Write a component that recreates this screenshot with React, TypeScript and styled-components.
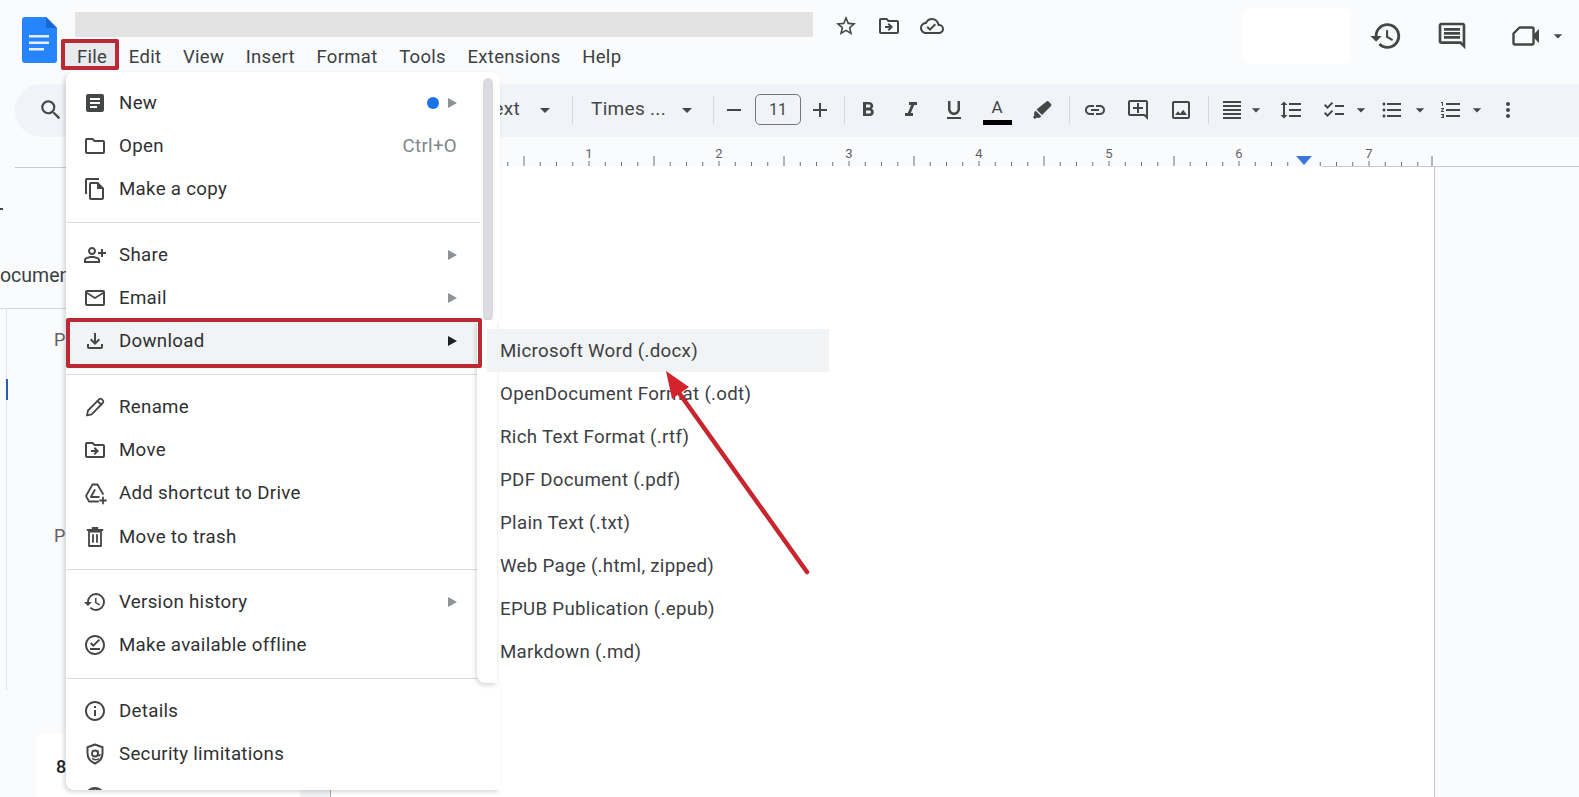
import React from "react";
import styled, { createGlobalStyle } from "styled-components";
import {
  MdArticle, MdOutlineFolder, MdOutlineFileCopy, MdOutlinePersonAddAlt, MdOutlineEmail, MdOutlineFileDownload,
  MdOutlineDriveFileMove, MdHistory, MdOutlineOfflinePin,
  MdInfoOutline, MdLanguage, MdSearch, MdStarBorder, MdOutlineCloudDone, MdOutlineComment,
  MdFormatBold, MdFormatItalic, MdFormatUnderlined, MdLink, MdOutlineAddComment, MdOutlineImage,
  MdFormatAlignJustify, MdFormatLineSpacing, MdChecklist, MdFormatListBulleted, MdFormatListNumbered, MdMoreVert,
  MdArrowDropDown, MdRemove, MdAdd,
} from "react-icons/md";

const FONT = `Roboto, "Liberation Sans", sans-serif`;
const RED = "#b92a35";

const Global = createGlobalStyle`
  html, body { margin: 0; padding: 0; background: #f9fbfd; }
  body { font-family: ${FONT}; overflow: hidden; }
  * { box-sizing: border-box; }
`;

const Page = styled.div`
  position: relative; width: 1579px; height: 797px; overflow: hidden; background: #f9fbfd;
  display: flex; flex-direction: column; color: #2f3133;
`;

/* ---------- header ---------- */
const Header = styled.header`display: flex; height: 84px; flex: none;`;
const LogoSlot = styled.div`width: 75px; flex: none; padding: 17px 0 0 22px;`;
const TitleColumn = styled.div`display: flex; flex-direction: column;`;
const TitleRow = styled.div`display: flex; align-items: center; height: 25px; margin-top: 12px;`;
const TitleBar = styled.div`width: 738px; height: 25px; background: #e3e3e3;`;
const TitleIcons = styled.div`display: flex; gap: 19px; margin: 3px 0 0 21px; color: #444746; font-size: 24px; line-height: 0;`;
const MenuBar = styled.nav`display: flex; gap: 21.6px; margin: 7px 0 0 2px; font-size: 18.5px; letter-spacing: .3px; color: #3c4043;`;
const MenuLabel = styled.span<{ $boxed?: boolean }>`
  position: relative; line-height: 26px;
  ${(p) => p.$boxed && `
    &::before { content: ""; position: absolute; z-index: 0; left: -16px; right: -12px; top: -5px; bottom: 0;
      background: #e8eaed; border: 4px solid ${RED}; border-radius: 2px; }
    & > span { position: relative; z-index: 1; }
  `}
`;
const HeaderRight = styled.div`display: flex; align-items: center; margin-left: auto; padding: 8px 11px 20px 0; color: #444746; line-height: 0;`;
const ShareSlot = styled.div`width: 109px; height: 56px; background: #fff; border-radius: 8px; margin-right: 11px;`;
const HeaderAction = styled.span<{ $w: number; $size: number; $ml?: number }>`
  width: ${(p) => p.$w}px; margin-left: ${(p) => p.$ml ?? 0}px; display: flex; justify-content: center; font-size: ${(p) => p.$size}px;
`;

/* ---------- toolbar ---------- */
const Toolbar = styled.div`
  display: flex; align-items: center; height: 53px; flex: none; margin-left: 15px; padding-bottom: 2px;
  background: #f0f3f8; border-radius: 27px 0 0 27px; color: #444746;
`;
const ToolLead = styled.div`
  width: 518px; flex: none; display: flex; justify-content: space-between; align-items: center;
  padding: 0 13px 0 23px; font-size: 26px; line-height: 0;
`;
const ToolText = styled.span<{ $ml?: number; $w?: number }>`
  margin: 0 0 2px ${(p) => p.$ml ?? 0}px; ${(p) => p.$w && `width: ${p.$w}px;`} flex: none;
  font-size: 19px; line-height: 24px; letter-spacing: .3px; white-space: nowrap;
`;
const Tool = styled.span<{ $ml: number; $w?: number }>`
  margin-left: ${(p) => p.$ml}px; width: ${(p) => p.$w ?? 24}px; height: 24px; flex: none;
  display: flex; align-items: center; justify-content: center; font-size: 24px; line-height: 0;
`;
const Caret = styled(Tool)`font-size: 26px; width: ${(p) => p.$w ?? 20}px;`;
const ToolSep = styled.span<{ $ml: number }>`margin-left: ${(p) => p.$ml}px; width: 1px; height: 28px; background: #d5d8dc; flex: none;`;
const FontSize = styled.span`
  margin-left: 9px; width: 46px; height: 31px; flex: none; border: 1px solid #747775; border-radius: 5px;
  display: flex; align-items: center; justify-content: center; font-size: 16px;
`;
const ColorTool = styled.span`
  margin: 0 0 3px 16px; width: 30px; height: 34px; flex: none; display: flex; flex-direction: column; align-items: center;
  justify-content: flex-end; font-size: 17px; line-height: 20px;
  &::after { content: ""; width: 29px; height: 5px; background: #000; margin-top: 3px; }
`;

/* ---------- ruler ---------- */
const RulerRow = styled.div`height: 30px; flex: none; line-height: 0;`;

/* ---------- workspace ---------- */
const Workspace = styled.div`flex: 1; display: flex; min-height: 0;`;
const Sidebar = styled.aside`width: 300px; flex: none; display: flex; flex-direction: column;`;
const SideRule = styled.div`height: 1px; background: #c9cdd2; margin-left: 15px;`;
const SideDash = styled.div`width: 3px; height: 2px; background: #444; margin-top: 40px;`;
const SideTitle = styled.div`margin-top: 54px; font-size: 19.5px; line-height: 24px; color: #3c4043; white-space: nowrap;`;
const SideDivider = styled.div`height: 1px; background: #d5d8dc; margin-top: 20px;`;
const Outline = styled.div`
  position: relative; height: 381px; margin-left: 6px; border-left: 1.5px solid #dfe1e5; padding: 18px 0 0 47px;
  &::before { content: ""; position: absolute; left: -1.5px; top: 70px; width: 2px; height: 21px; background: #2a5db0; }
`;
const OutlineItem = styled.div<{ $mt?: number }>`margin-top: ${(p) => p.$mt ?? 0}px; font-size: 18px; line-height: 26px; color: #5f6368;`;
const PageCard = styled.div`
  margin: 43px 0 0 36px; flex: 1; background: #fff; border-radius: 6px 0 0 0; padding: 22px 0 0 20px;
  font-size: 18px; font-weight: 500; line-height: 24px; color: #202124;
`;
const DocPage = styled.main`flex: none; width: 1135px; background: #fff; border-right: 1px solid #c7c9cc; display: flex; align-items: flex-end;`;
const DocFooter = styled.div`width: 31px; height: 7px; background: #f1f2f3; border-right: 1px solid #aaa;`;

/* ---------- file menu ---------- */
const FileMenu = styled.div`
  position: absolute; z-index: 5; left: 66px; top: 72px; width: 434px; height: 718px; overflow: hidden;
  background: #fff; border-radius: 8px 8px 0 8px; padding-top: 9px; box-shadow: -2px 2px 4px rgba(60,64,67,.2);
`;
const Scrollbar = styled.div`position: absolute; left: 417px; top: 6px; width: 10px; height: 243px; border-radius: 5px; background: #dadce0;`;
const MenuRow = styled.div<{ $active?: boolean }>`
  position: relative; display: flex; align-items: center; width: 413px; height: 43.35px; padding: 0 22px 0 17px;
  font-size: 18.7px; letter-spacing: .3px; color: #2f3133;
  & > * { position: relative; z-index: 1; }
  ${(p) => p.$active && `
    &::after { content: ""; position: absolute; z-index: 0; left: 0; right: -3px; top: 0; bottom: -6px; background: #f1f3f4; }
  `}
`;
const RowIcon = styled.span`width: 24px; height: 24px; flex: none; margin-right: 12px; font-size: 24px; line-height: 0; color: #444746;`;
const RowLabel = styled.span`flex: 1; white-space: nowrap;`;
const Shortcut = styled.span`color: #80868b;`;
const RowDot = styled.span`width: 12px; height: 12px; border-radius: 50%; background: #1a73e8; margin-right: 9px;`;
const RowArrow = styled.span<{ $dark?: boolean }>`
  width: 0; height: 0; border-style: solid; border-width: 5px 0 5px 9px;
  border-color: transparent transparent transparent ${(p) => (p.$dark ? "#202124" : "#8f9397")};
`;
const MenuSeparator = styled.div`height: 1px; width: 414px; margin: 10.5px 0; background: #dadce0;`;
const DownloadFrame = styled.div`
  position: absolute; z-index: 7; left: 66px; top: 318px; width: 416px; height: 50px;
  border: 4px solid ${RED}; border-radius: 2px;
`;

/* ---------- submenu ---------- */
const SubMenu = styled.div`
  position: absolute; z-index: 6; left: 477px; top: 320px; width: 352px; height: 363px; background: #fff;
  padding: 9px 0 0 10px; border-radius: 4px 0 0 8px;
  &::before { content: ""; position: absolute; z-index: -1; left: 0; top: 0; bottom: 0; width: 20px;
    box-shadow: -1px 2px 4px 0 rgba(60,64,67,.22); border-radius: 4px 0 0 8px; }
`;
const SubRow = styled.div<{ $hover?: boolean }>`
  height: 43.1px; display: flex; align-items: center; padding-left: 13px; font-size: 18.7px; letter-spacing: .3px;
  color: #3c4043; white-space: nowrap; background: ${(p) => (p.$hover ? "#f1f3f4" : "transparent")};
`;
const ArrowOverlay = styled.svg`position: absolute; z-index: 8; left: 0; top: 0; pointer-events: none;`;

const DocsLogo = () => (
  <svg width="35" height="46" viewBox="0 0 35 46">
    <path d="M3 0H24L35 11V43a3 3 0 0 1-3 3H3a3 3 0 0 1-3-3V3a3 3 0 0 1 3-3z" fill="#2684fc" />
    <path d="M24 0L35 11H26a2 2 0 0 1-2-2z" fill="#1967d2" />
    <path d="M7 18H27V20.500H7zM7 24.500H27V27H7zM7 31H22V33.500H7z" fill="#e8f0fe" />
  </svg>
);

const Line = ({ children }: { children: React.ReactNode }) => (
  <svg width="24" height="24" viewBox="0 0 24 24" fill="none" stroke="currentColor" strokeWidth="1.800" strokeLinejoin="round" strokeLinecap="round">
    {children}
  </svg>
);

const ShieldAt = () => (
  <Line>
    <path d="M12 2.500l7.500 2.800v5.900c0 4.800-3 8.300-7.500 10.300-4.500-2-7.500-5.500-7.500-10.300V5.300z" strokeWidth="2" />
    <circle cx="12" cy="11.500" r="3" />
    <path d="M15 9v3.500c0 1.500 2 1.500 2 0M15.500 16.800c-2 1.200-4.500 1.200-6-.3" strokeWidth="1.500" />
  </Line>
);

const PencilLine = () => (
  <Line>
    <path d="M4 20.500l1-5L16 4.300a2 2 0 0 1 2.900 0l.8.8a2 2 0 0 1 0 2.900L8.700 19.300z" />
    <path d="M14.500 6l3.500 3.500" />
  </Line>
);

const DriveShortcut = () => (
  <Line>
    <path d="M9.500 3.500h5L20 13M3 15L9.500 3.500M3 15l3 5.500h9" />
    <path d="M11.800 9l-4 7h8" />
    <path d="M20 16.500v6M17 19.500h6" />
  </Line>
);

const TrashBars = () => (
  <Line>
    <path d="M6 6.500h12V21H6z" />
    <path d="M4.500 5h15M9.500 3h5" />
    <path d="M10 10v7M14 10v7" />
  </Line>
);

const MeetCamera = () => (
  <svg width="28" height="24" viewBox="0 0 28 24">
    <path d="M7.500 3.500H20a1.500 1.500 0 0 1 1.500 1.500v14a1.500 1.500 0 0 1-1.500 1.500H3A1.500 1.500 0 0 1 1.500 19V9.500z" fill="none" stroke="currentColor" strokeWidth="2.400" strokeLinejoin="round" />
    <path d="M22 10L27 5V19L22 14z" fill="currentColor" />
  </svg>
);

const Highlighter = () => (
  <svg width="24" height="24" viewBox="0 0 24 24" fill="currentColor">
    <path d="M16.500 3.500a1.500 1.500 0 0 1 2.100 0l2.400 2.400a1.500 1.500 0 0 1 0 2.100l-9 9-5.500-5.500z" />
    <path d="M5.700 12.700l5.600 5.600-1.500 1.500H6.500L4.800 21 3 19.200l1.200-1.700v-3.300z" />
  </svg>
);

const ticks: number[] = Array.from({ length: 58 }, (_, i) => i + 3);
const tickX = (i: number) => Math.min(459 + i * 16.25, 1432);

const Ruler = () => (
  <svg width="1579" height="30" viewBox="0 0 1579 30">
    {ticks.map((i) => {
      if (tickX(i) > 1296 && tickX(i) < 1312) return null;
      const top = i % 8 === 4 ? 19 : i % 8 === 0 ? 24 : 25;
      return <line key={i} x1={tickX(i)} x2={tickX(i)} y1={top} y2={29} stroke="#6f7377" strokeWidth="1" />;
    })}
    {[1, 2, 3, 4, 5, 6, 7].map((n) => (
      <text key={n} x={459 + n * 130} y={21} textAnchor="middle" fontFamily={FONT} fontSize="13" fill="#5f6368">{n}</text>
    ))}
    <path d="M1296 19H1312L1304 28z" fill="#3c78d8" />
    <line x1="1322" x2="1579" y1="29.500" y2="29.500" stroke="#c7c9cc" strokeWidth="1" />
  </svg>
);

const Overlay = () => (
  <ArrowOverlay width="1579" height="797" viewBox="0 0 1579 797">
    <line x1="807" y1="572" x2="677" y2="390" stroke="#c8262f" strokeWidth="4.500" strokeLinecap="round" />
    <path d="M666 371L689 387 672 399z" fill="#d3232c" />
  </ArrowOverlay>
);

const fileRows: Array<Array<{ icon: React.ReactNode; label?: string; extra?: React.ReactNode; active?: boolean }>> = [
  [
    { icon: <MdArticle />, label: "New", extra: <><RowDot /><RowArrow /></> },
    { icon: <MdOutlineFolder />, label: "Open", extra: <Shortcut>Ctrl+O</Shortcut> },
    { icon: <MdOutlineFileCopy />, label: "Make a copy" },
  ],
  [
    { icon: <MdOutlinePersonAddAlt />, label: "Share", extra: <RowArrow /> },
    { icon: <MdOutlineEmail />, label: "Email", extra: <RowArrow /> },
    { icon: <MdOutlineFileDownload />, label: "Download", extra: <RowArrow $dark />, active: true },
  ],
  [
    { icon: <PencilLine />, label: "Rename" },
    { icon: <MdOutlineDriveFileMove />, label: "Move" },
    { icon: <DriveShortcut />, label: "Add shortcut to Drive" },
    { icon: <TrashBars />, label: "Move to trash" },
  ],
  [
    { icon: <MdHistory />, label: "Version history", extra: <RowArrow /> },
    { icon: <MdOutlineOfflinePin />, label: "Make available offline" },
  ],
  [
    { icon: <MdInfoOutline />, label: "Details" },
    { icon: <ShieldAt />, label: "Security limitations" },
    { icon: <MdLanguage /> },
  ],
];

const formats = [
  "Microsoft Word (.docx)", "OpenDocument Format (.odt)", "Rich Text Format (.rtf)", "PDF Document (.pdf)",
  "Plain Text (.txt)", "Web Page (.html, zipped)", "EPUB Publication (.epub)", "Markdown (.md)",
];

export default function App() {
  return (
    <Page>
      <Global />
      <Header>
        <LogoSlot><DocsLogo /></LogoSlot>
        <TitleColumn>
          <TitleRow>
            <TitleBar />
            <TitleIcons><MdStarBorder /><MdOutlineDriveFileMove /><MdOutlineCloudDone /></TitleIcons>
          </TitleRow>
          <MenuBar>
            <MenuLabel $boxed><span>File</span></MenuLabel>
            {["Edit", "View", "Insert", "Format", "Tools", "Extensions", "Help"].map((m) => <MenuLabel key={m}>{m}</MenuLabel>)}
          </MenuBar>
        </TitleColumn>
        <HeaderRight>
          <ShareSlot />
          <HeaderAction $w={48} $size={34}><MdHistory /></HeaderAction>
          <HeaderAction $w={84} $size={32}><MdOutlineComment /></HeaderAction>
          <HeaderAction $w={44} $ml={10} $size={28}><MeetCamera /></HeaderAction>
          <HeaderAction $w={20} $size={26}><MdArrowDropDown /></HeaderAction>
        </HeaderRight>
      </Header>

      <Toolbar>
        <ToolLead><MdSearch /><ToolText>Normal text</ToolText></ToolLead>
        <Caret $ml={0} $w={24}><MdArrowDropDown /></Caret>
        <ToolSep $ml={15} />
        <ToolText $ml={18} $w={74}>Times ...</ToolText>
        <Caret $ml={10} $w={24}><MdArrowDropDown /></Caret>
        <ToolSep $ml={14} />
        <Tool $ml={8}><MdRemove /></Tool>
        <FontSize>11</FontSize>
        <Tool $ml={7}><MdAdd /></Tool>
        <ToolSep $ml={12} />
        <Tool $ml={11}><MdFormatBold /></Tool>
        <Tool $ml={19}><MdFormatItalic /></Tool>
        <Tool $ml={19}><MdFormatUnderlined /></Tool>
        <ColorTool>A</ColorTool>
        <Tool $ml={18}><Highlighter /></Tool>
        <ToolSep $ml={15} />
        <Tool $ml={13}><MdLink /></Tool>
        <Tool $ml={19}><MdOutlineAddComment /></Tool>
        <Tool $ml={19}><MdOutlineImage /></Tool>
        <ToolSep $ml={15} />
        <Tool $ml={11}><MdFormatAlignJustify /></Tool>
        <Caret $ml={2}><MdArrowDropDown /></Caret>
        <Tool $ml={13}><MdFormatLineSpacing /></Tool>
        <Tool $ml={19}><MdChecklist /></Tool>
        <Caret $ml={5}><MdArrowDropDown /></Caret>
        <Tool $ml={9}><MdFormatListBulleted /></Tool>
        <Caret $ml={6}><MdArrowDropDown /></Caret>
        <Tool $ml={9}><MdFormatListNumbered /></Tool>
        <Caret $ml={4}><MdArrowDropDown /></Caret>
        <Tool $ml={9}><MdMoreVert /></Tool>
      </Toolbar>

      <RulerRow><Ruler /></RulerRow>

      <Workspace>
        <Sidebar>
          <SideRule />
          <SideDash />
          <SideTitle>ocumen</SideTitle>
          <SideDivider />
          <Outline>
            <OutlineItem>P</OutlineItem>
            <OutlineItem $mt={170}>Pa</OutlineItem>
          </Outline>
          <PageCard>8</PageCard>
        </Sidebar>
        <DocPage><DocFooter /></DocPage>
      </Workspace>

      <FileMenu>
        <Scrollbar />
        {fileRows.map((group, g) => (
          <React.Fragment key={g}>
            {g > 0 && <MenuSeparator />}
            {group.map((r, i) => (
              <MenuRow key={i} $active={r.active}>
                <RowIcon>{r.icon}</RowIcon>
                {r.label && <RowLabel>{r.label}</RowLabel>}
                {r.extra}
              </MenuRow>
            ))}
          </React.Fragment>
        ))}
      </FileMenu>
      <DownloadFrame />

      <SubMenu>
        {formats.map((f, i) => <SubRow key={f} $hover={i === 0}>{f}</SubRow>)}
      </SubMenu>

      <Overlay />
    </Page>
  );
}
